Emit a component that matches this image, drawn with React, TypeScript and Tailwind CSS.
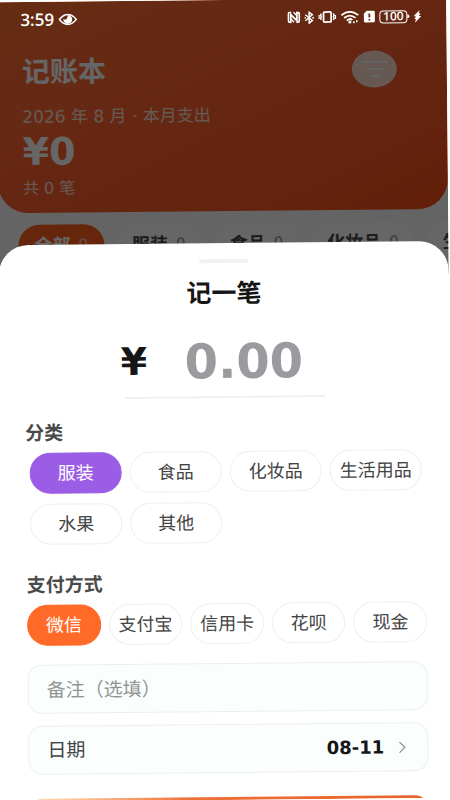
import { useState } from "react";
import { ChevronRight } from "lucide-react";
import clsx from "clsx";

const tabs = ["全部", "服装", "食品", "化妆品", "生活用品"];
const categories = ["服装", "食品", "化妆品", "生活用品", "水果", "其他"];
const payments = ["微信", "支付宝", "信用卡", "花呗", "现金"];

function StatusBar() {
  return (
    <div className="absolute inset-x-0 top-0 z-20 flex h-9 items-center justify-between pr-[25px] pl-6 text-white">
      <div className="flex items-center gap-1">
        <span className="font-['Open_Sans',sans-serif] text-[17px] font-semibold">3:59</span>
        <svg width="19" height="12" viewBox="0 0 19 12" fill="none">
          <path d="M1 6Q5 1 9.5 1T18 6Q14 11 9.5 11T1 6Z" stroke="currentColor" strokeWidth="1.5" />
          <path d="M9.5 1.6A4.4 4.4 0 1 1 5.1 5.2Q6.8 6.8 8.2 5.4T9.5 1.6Z" fill="currentColor" />
        </svg>
      </div>

      <div className="flex items-center gap-1">
        <svg width="13" height="12" viewBox="0 0 13 12" fill="none" stroke="currentColor">
          <path d="M4 1H2.6Q1 1 1 2.6V9.4Q1 11 2.6 11H3.4V3.2L9.6 9.4V1H10.4Q12 1 12 2.6V9.4Q12 11 10.4 11H9" strokeWidth="1.7" />
          <path d="M6.2 1L9.6 4.4M3.6 7.6L6.8 11" strokeWidth="1.3" />
        </svg>
        <svg width="10" height="13" viewBox="0 0 10 13" fill="none" stroke="currentColor" strokeWidth="1.5">
          <path d="M1 3.5L8 9.3L4.8 12V1L8 3.7L1 9.5" />
          <path d="M0 6.5H1.5M8 6.5H9.8" />
        </svg>
        <svg width="18" height="12" viewBox="0 0 18 12" fill="none" stroke="currentColor">
          <rect x="5.2" y="1" width="7.6" height="10" rx="1" strokeWidth="1.8" />
          <path d="M3 2.5L2.2 4L3 5.5L2.2 7L3 9M15 2.5L15.8 4L15 5.5L15.8 7L15 9M.7 4V8M17.3 4V8" strokeWidth="1.4" />
        </svg>
        <svg width="19" height="13" viewBox="0 0 19 13" fill="none" stroke="currentColor" strokeWidth="1.8">
          <path d="M1 4.4Q9.5-2.4 18 4.4M3.8 7.2Q9.5 2.4 15.2 7.2M6.5 9.8Q9.5 7 12 9.2" />
          <circle cx="9.5" cy="11.3" r="1.6" fill="currentColor" stroke="none" />
          <path d="M13.5 10.4V12.4M16.4 9.6V11.6" strokeWidth="1.6" />
        </svg>
        <svg width="12" height="12" viewBox="0 0 12 12">
          <path fill="currentColor" d="M3.6 0H10Q11.5 0 11.5 1.5V10.5Q11.5 12 10 12H2Q.5 12 .5 10.5V3Z" />
          <path stroke="#672a14" strokeWidth="1.8" d="M6 2.8V7M6 8.3V10" />
        </svg>
        <div className="flex items-center">
          <span className="flex h-[13px] w-[28px] items-center justify-center rounded-[4px] border border-white font-['Open_Sans',sans-serif] text-xs font-semibold">
            100
          </span>
          <span className="h-1 w-0.5 rounded-r bg-white" />
        </div>
        <svg width="8" height="13" viewBox="0 0 8 13" fill="currentColor">
          <path d="M6.4 0L.4 5.8L2.9 6.6L.8 8.6L2.6 9.2L1.6 12.5L7.8 6.2L5.4 5.6L7.4 3.6L5.4 3.2Z" />
        </svg>
      </div>
    </div>
  );
}

function Chip({ label, active, activeClass, onClick }: {
  label: string;
  active: boolean;
  activeClass: string;
  onClick: () => void;
}) {
  return (
    <button
      type="button"
      aria-pressed={active}
      onClick={onClick}
      className={clsx(
        "h-[41px] rounded-full border text-lg whitespace-nowrap",
        active ? activeClass : "border-[#efefef] bg-white text-[#444444]",
      )}
    >
      {label}
    </button>
  );
}

function Ledger() {
  return (
    <div className="bg-[#fafafa]">
      <header className="rounded-b-[30px] bg-linear-to-br from-[#fb7030] via-[#ff6733] via-30% to-[#f5501a] pt-[52px] pb-3 pl-[25px] text-white">
        <div className="flex items-center justify-between pr-[50px]">
          <h1 className="text-[28px] leading-9 font-bold">记账本</h1>
          <button
            type="button"
            aria-label="筛选"
            className="flex h-[37px] w-[45px] items-center justify-center rounded-[50%] bg-[#ffdccd]"
          >
            <svg width="26" height="17" viewBox="0 0 26 17" stroke="#f4ffff" strokeWidth="1.8" strokeLinecap="round">
              <path d="M1 1.5H25M5 8.5H21M9.5 15.5H16" />
            </svg>
          </button>
        </div>
        <p className="mt-3.5 text-[17px] leading-6 text-white/80">2026 年 8 月 · 本月支出</p>
        <p className="text-[38px] leading-[46px] font-bold">¥0</p>
        <p className="mt-0.5 text-base leading-6 text-white/80">共 0 笔</p>
      </header>

      <div className="flex gap-3 overflow-hidden pt-3 pl-5">
        {tabs.map((tab, i) => (
          <button
            key={tab}
            type="button"
            className={clsx(
              "flex h-[42px] shrink-0 items-center gap-2 rounded-full px-4 text-lg font-bold",
              i === 0 ? "bg-[#ff6020] text-white" : "bg-white text-[#444444]",
            )}
          >
            {tab}
            <span className="text-[15px] font-normal opacity-60">0</span>
          </button>
        ))}
      </div>
    </div>
  );
}

function EntrySheet() {
  const [category, setCategory] = useState("服装");
  const [payment, setPayment] = useState("微信");
  const [amount, setAmount] = useState("");
  const [note, setNote] = useState("");

  return (
    <section
      role="dialog"
      aria-labelledby="sheet-title"
      className="absolute inset-x-0 top-[243px] bottom-0 z-10 flex flex-col overflow-hidden rounded-t-[30px] bg-white px-[25px] pt-4"
    >
      <div className="h-1 w-[50px] shrink-0 self-center rounded-sm bg-[#f1f1f1]" />
      <h2 id="sheet-title" className="mt-[15px] text-center text-[25px] leading-8 font-bold text-[#161616]">
        记一笔
      </h2>

      <div className="mt-[23px] flex h-14 w-[208px] shrink-0 items-center gap-3 self-center font-bold">
        <label htmlFor="amount" className="text-[38px] text-[#161616]">¥</label>
        <input
          id="amount"
          inputMode="decimal"
          placeholder="0.00"
          value={amount}
          onChange={(e) => setAmount(e.target.value)}
          className="h-14 min-w-0 flex-1 text-center text-5xl text-[#161616] outline-none placeholder:text-[#9b9b9f]"
        />
      </div>
      <div className="mt-[7px] h-0.5 w-[200px] shrink-0 self-center bg-[#f0f0f0]" />

      <h3 className="mt-[21px] text-[19px] leading-6 font-bold text-[#4a4a4a]">分类</h3>
      <div className="mt-2 grid grid-cols-4 gap-x-2 gap-y-2.5 px-1">
        {categories.map((c) => (
          <Chip
            key={c}
            label={c}
            active={c === category}
            activeClass="border-[#9b5de5] bg-[#9b5de5] text-white"
            onClick={() => setCategory(c)}
          />
        ))}
      </div>

      <h3 className="mt-7 text-[19px] leading-6 font-bold text-[#4a4a4a]">支付方式</h3>
      <div className="mt-2 grid grid-cols-5 gap-2">
        {payments.map((p) => (
          <Chip
            key={p}
            label={p}
            active={p === payment}
            activeClass="border-[#ff6a28] bg-[#ff6a28] text-white"
            onClick={() => setPayment(p)}
          />
        ))}
      </div>

      <input
        aria-label="备注"
        placeholder="备注（选填）"
        value={note}
        onChange={(e) => setNote(e.target.value)}
        className="mt-[19px] h-[49px] shrink-0 rounded-[14px] border border-[#eeeeee] bg-[#fafffe] px-[18px] text-[19px] text-[#444444] outline-none placeholder:text-[#949494]"
      />
      <button
        type="button"
        className="mt-3 flex h-[49px] shrink-0 items-center rounded-[14px] border border-[#eeeeee] bg-[#fafffe] pr-[15px] pl-[18px] text-[19px] text-[#444444]"
      >
        日期
        <span className="ml-auto text-lg font-bold text-[#161616]">08-11</span>
        <ChevronRight className="ml-2 h-5 w-5 text-[#8e8e8e]" strokeWidth={1.5} />
      </button>
      <button
        type="button"
        aria-label="保存"
        className="mt-6 h-[50px] shrink-0 rounded-[14px] bg-linear-to-r from-[#fbe3b8] via-[#ee7038] via-40% to-[#e8622c]"
      />
    </section>
  );
}

export default function App() {
  return (
    <main className="h-screen overflow-hidden bg-white font-['DejaVu_Sans','Noto_Sans_CJK_SC',sans-serif]">
      <div className="relative h-full -rotate-[0.55deg] overflow-hidden bg-white">
        <Ledger />
        <div className="absolute inset-x-0 top-0 h-[276px] bg-black/60" />
        <StatusBar />
        <EntrySheet />
      </div>
    </main>
  );
}
